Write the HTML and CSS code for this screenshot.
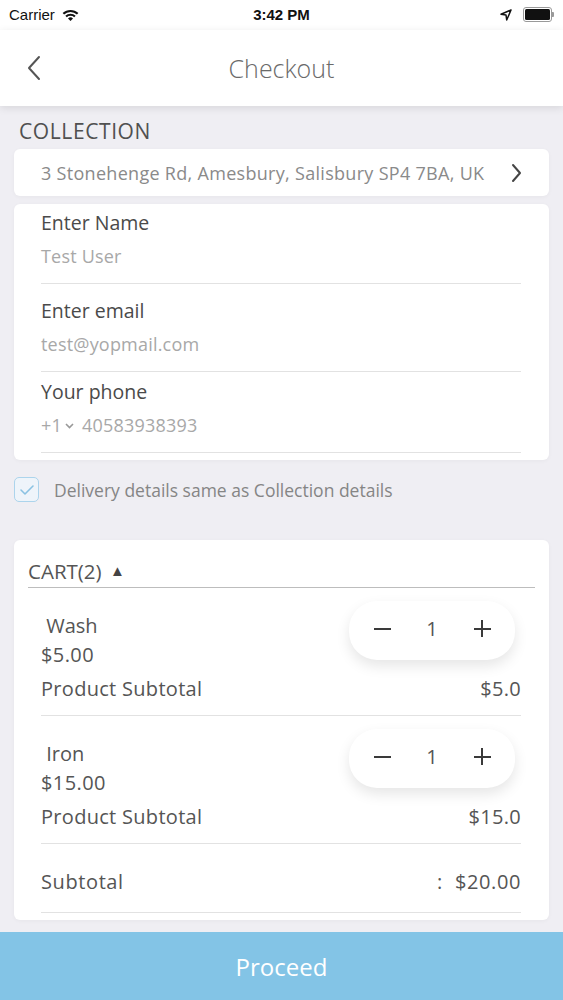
FILE: index.html
```html
<!DOCTYPE html>
<html lang="en">
<head>
    <meta charset="UTF-8">
    <meta name="viewport" content="width=device-width, initial-scale=1.0">
    <title>Checkout</title>
    <link rel="stylesheet" href="styles.css">
</head>
<body>
    <div class="status-bar">
        <div class="status-left">
            <span>Carrier</span>
            <svg class="wifi" width="17" height="12" viewBox="0 0 17 12">
                <path d="M0.6 4.1 A11.5 11.5 0 0 1 16.4 4.1 L14.9 5.6 A9.3 9.3 0 0 0 2.1 5.6 Z" fill="#111"/>
                <path d="M3.3 6.8 A7.6 7.6 0 0 1 13.7 6.8 L12.2 8.3 A5.4 5.4 0 0 0 4.8 8.3 Z" fill="#111"/>
                <path d="M6 9.5 A3.7 3.7 0 0 1 11 9.5 L8.5 12 Z" fill="#111"/>
            </svg>
        </div>
        <div class="status-time">3:42 PM</div>
        <div class="status-right">
            <svg class="arrow" width="12" height="12" viewBox="0 0 12 12">
                <path d="M11 1 L1 5.3 L6 6 L6.7 11 Z" fill="none" stroke="#111" stroke-width="1.5" stroke-linejoin="round"/>
            </svg>
            <div class="battery"><div class="battery-level"></div></div>
            <div class="battery-nub"></div>
        </div>
    </div>

    <div class="nav-bar">
        <svg class="back" width="16" height="26" viewBox="0 0 16 26">
            <path d="M13 2 L3 13 L13 24" fill="none" stroke="#555" stroke-width="2" stroke-linecap="round" stroke-linejoin="round"/>
        </svg>
        <div class="nav-title">Checkout</div>
    </div>

    <div class="content">
        <div class="section-label">COLLECTION</div>

        <div class="card address-card">
            <span class="address">3 Stonehenge Rd, Amesbury, Salisbury SP4 7BA, UK</span>
            <svg width="12" height="20" viewBox="0 0 12 20">
                <path d="M3 2 L10 10 L3 18" fill="none" stroke="#444" stroke-width="2" stroke-linecap="round" stroke-linejoin="round"/>
            </svg>
        </div>

        <div class="card form-card">
            <div class="field">
                <div class="field-label">Enter Name</div>
                <div class="field-value">Test User</div>
            </div>
            <div class="field">
                <div class="field-label">Enter email</div>
                <div class="field-value">test@yopmail.com</div>
            </div>
            <div class="field">
                <div class="field-label">Your phone</div>
                <div class="field-value">+1<svg class="caret" width="11" height="8" viewBox="0 0 11 8"><path d="M2 2 L5.5 5.5 L9 2" fill="none" stroke="#999" stroke-width="1.6"/></svg>40583938393</div>
            </div>
        </div>

        <div class="same-row">
            <div class="checkbox">
                <svg width="16" height="12" viewBox="0 0 16 12">
                    <path d="M2 6 L6 10 L14 2" fill="none" stroke="#8ac2e2" stroke-width="1.6" stroke-linecap="round" stroke-linejoin="round"/>
                </svg>
            </div>
            <span class="same-text">Delivery details same as Collection details</span>
        </div>

        <div class="card cart-card">
            <div class="cart-head">CART(2) <span class="tri">&#9650;</span></div>

            <div class="item">
                <div class="item-top">
                    <div class="item-info">
                        <div class="item-name">&nbsp;Wash</div>
                        <div class="item-price">$5.00</div>
                    </div>
                    <div class="stepper">
                        <span class="minus"></span>
                        <span class="qty">1</span>
                        <span class="plus"></span>
                    </div>
                </div>
                <div class="row">
                    <span>Product Subtotal</span>
                    <span>$5.0</span>
                </div>
            </div>

            <div class="item">
                <div class="item-top">
                    <div class="item-info">
                        <div class="item-name">&nbsp;Iron</div>
                        <div class="item-price">$15.00</div>
                    </div>
                    <div class="stepper">
                        <span class="minus"></span>
                        <span class="qty">1</span>
                        <span class="plus"></span>
                    </div>
                </div>
                <div class="row">
                    <span>Product Subtotal</span>
                    <span>$15.0</span>
                </div>
            </div>

            <div class="total row">
                <span>Subtotal</span>
                <span><span class="colon">:</span>$20.00</span>
            </div>
        </div>
    </div>

    <button class="proceed">Proceed</button>
</body>
</html>
```

FILE: styles.css
```css
body {
    margin: 0;
    padding: 0;
    width: 563px;
    height: 1000px;
    overflow: hidden;
    background-color: #efeef3;
    font-family: 'Open Sans', 'Noto Sans', sans-serif;
    color: #555;
    display: flex;
    flex-direction: column;
}

.status-bar {
    height: 30px;
    background-color: #fff;
    display: flex;
    align-items: center;
    justify-content: space-between;
    padding: 0 9px;
    font-family: 'Liberation Sans', Arial, sans-serif;
    font-size: 15px;
    color: #111;
}

.status-left {
    display: flex;
    align-items: center;
    gap: 7px;
    width: 120px;
}

.status-time {
    font-weight: bold;
    font-size: 15px;
}

.status-right {
    width: 120px;
    display: flex;
    align-items: center;
    justify-content: flex-end;
}

.arrow {
    margin-right: 11px;
}

.battery {
    width: 25px;
    height: 11px;
    border: 1px solid #999;
    border-radius: 3px;
    padding: 1px;
}

.battery-level {
    width: 100%;
    height: 100%;
    background-color: #111;
    border-radius: 1.5px;
}

.battery-nub {
    width: 2px;
    height: 5px;
    background-color: #999;
    border-radius: 0 1px 1px 0;
}

.nav-bar {
    height: 77px;
    background-color: #fff;
    display: flex;
    align-items: center;
    justify-content: center;
    position: relative;
    box-shadow: 0 2px 8px rgba(0, 0, 0, 0.1);
    z-index: 1;
}

.back {
    position: absolute;
    left: 26px;
    top: 25px;
}

.nav-title {
    font-size: 25px;
    font-weight: 300;
    color: #6a6a6a;
}

.content {
    flex: 1;
    padding: 0 14px;
    display: flex;
    flex-direction: column;
}

.section-label {
    font-size: 21px;
    line-height: 24px;
    margin: 13px 0 6px 5px;
    letter-spacing: 0.6px;
    color: #505050;
}

.card {
    background-color: #fff;
    border-radius: 6px;
    box-shadow: 0 1px 4px rgba(0, 0, 0, 0.04);
}

.address-card {
    height: 47px;
    display: flex;
    align-items: center;
    justify-content: space-between;
    padding: 0 27px 0 27px;
}

.address {
    font-size: 18px;
    color: #8a8a8a;
    letter-spacing: 0.3px;
}

.form-card {
    margin-top: 8px;
    padding: 0 28px 7px 27px;
}

.field {
    padding-top: 16px;
    border-bottom: 1px solid #e2e2e2;
}

.field:first-child {
    padding-top: 8px;
}

.field:last-child {
    padding-top: 9px;
}

.field-label {
    font-size: 19.5px;
    line-height: 22px;
    color: #4a4a4a;
}

.field-value {
    font-size: 18px;
    line-height: 22px;
    margin: 11px 0 16px;
    color: #a8a8a8;
    letter-spacing: 0.2px;
    display: flex;
    align-items: center;
}

.caret {
    margin: 2px 7px 0 2px;
}

.same-row {
    margin-top: 17px;
    display: flex;
    align-items: center;
    gap: 15px;
}

.checkbox {
    width: 23px;
    height: 23px;
    border: 1.5px solid #acd4ec;
    background-color: #eef4fa;
    border-radius: 5px;
    display: flex;
    align-items: center;
    justify-content: center;
}

.same-text {
    font-size: 17.5px;
    color: #858585;
}

.cart-card {
    margin-top: 38px;
    padding: 0 28px 7px 27px;
}

.cart-head {
    margin: 0 -14px 0 -13px;
    padding: 18px 0 4px;
    font-size: 20.5px;
    line-height: 24px;
    color: #555;
    border-bottom: 1px solid #bdbdbd;
}

.tri {
    font-size: 15px;
    vertical-align: 3px;
    margin-left: 3px;
    color: #444;
}

.item {
    padding: 13px 0 14px;
    border-bottom: 1px solid #e2e2e2;
}

.item-top {
    display: flex;
    justify-content: space-between;
    align-items: flex-start;
}

.item-info {
    padding-top: 13px;
}

.item-name,
.item-price {
    font-size: 20px;
    line-height: 24px;
    color: #555;
}

.item-price {
    margin-top: 5px;
    letter-spacing: 0.4px;
}

.stepper {
    width: 150px;
    height: 55px;
    padding: 0 8px 4px;
    margin-right: 6px;
    border-radius: 28px;
    background-color: #fff;
    box-shadow: 0 6px 14px rgba(0, 0, 0, 0.1);
    display: grid;
    grid-template-columns: 1fr 1fr 1fr;
    align-items: center;
    justify-items: center;
}

.qty {
    font-size: 20px;
    color: #555;
}

.minus,
.plus {
    width: 17px;
    height: 17px;
    position: relative;
}

.minus::before,
.plus::before,
.plus::after {
    content: '';
    position: absolute;
    background-color: #3a3a3a;
}

.minus::before,
.plus::before {
    left: 0;
    top: 7.5px;
    width: 17px;
    height: 2px;
}

.plus::after {
    left: 7.5px;
    top: 0;
    width: 2px;
    height: 17px;
}

.row {
    margin-top: 10px;
    display: flex;
    justify-content: space-between;
    font-size: 20px;
    line-height: 24px;
    letter-spacing: 0.3px;
    color: #555;
}

.total {
    margin-top: 0;
    padding: 26px 0 18px;
    border-bottom: 1px solid #e2e2e2;
}

.total span {
    letter-spacing: 0.6px;
}

.colon {
    margin-right: 12px;
}

.proceed {
    height: 68px;
    margin-top: 12px;
    border: none;
    background-color: #83c4e6;
    color: #fff;
    font-family: 'Open Sans', 'Noto Sans', sans-serif;
    font-size: 24px;
    flex-shrink: 0;
}
```
